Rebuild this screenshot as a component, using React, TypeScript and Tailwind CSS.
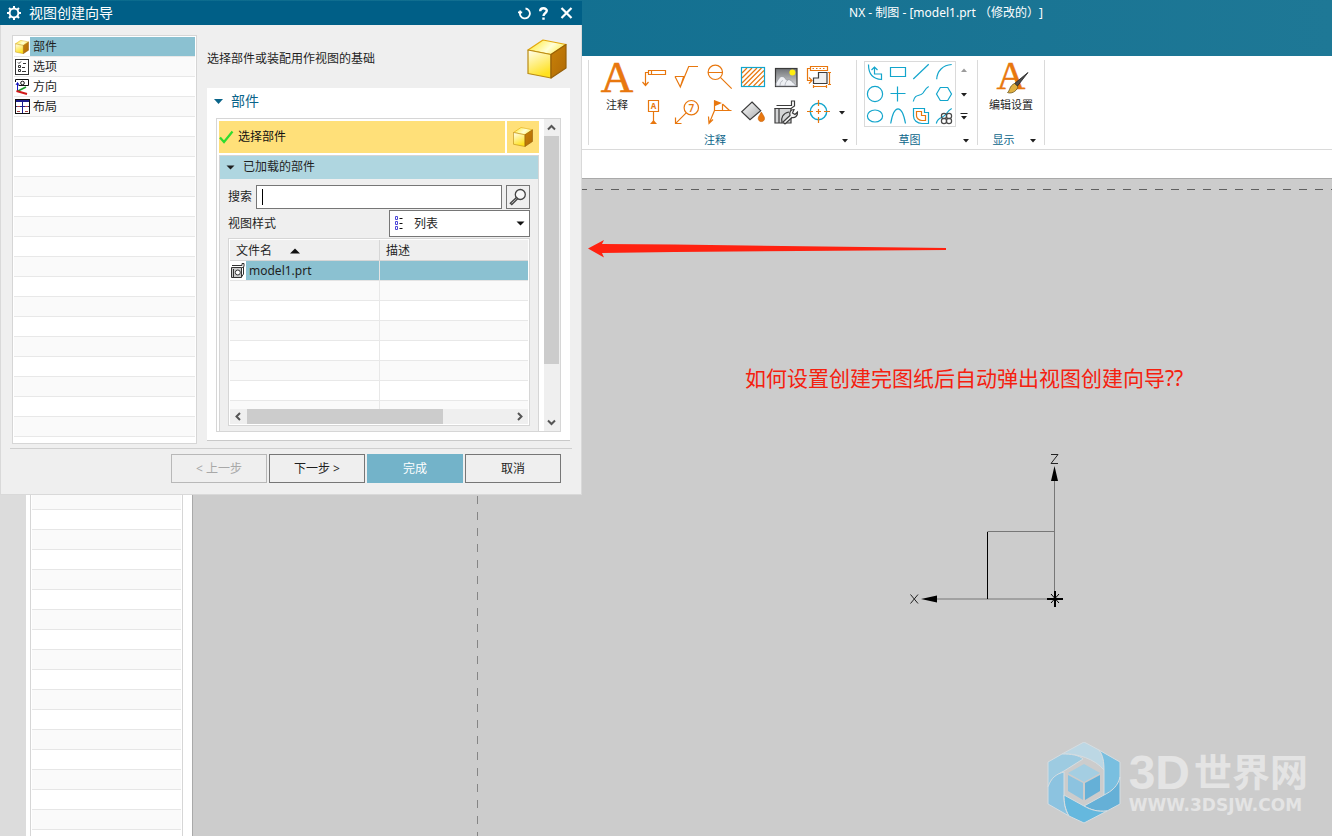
import type { ReactNode } from 'react';

const ORANGE = '#e8770e';
const CYAN = '#12a5cc';
const INK = '#3c3c3c';

function Cube({ size }: { size: number }) {
  return (
    <svg width={size} height={size} viewBox="0 0 40 40" className="block shrink-0">
      <defs>
        <linearGradient id="cubeFront" x1="0" y1="0" x2="0.4" y2="1">
          <stop offset="0" stopColor="#fffef0" />
          <stop offset="1" stopColor="#ffe11f" />
        </linearGradient>
        <linearGradient id="cubeTop" x1="0" y1="0.2" x2="1" y2="0.6">
          <stop offset="0" stopColor="#ffe92e" />
          <stop offset="0.6" stopColor="#ffffd8" />
          <stop offset="1" stopColor="#ffee50" />
        </linearGradient>
        <linearGradient id="cubeSide" x1="0" y1="0" x2="1" y2="1">
          <stop offset="0" stopColor="#c98208" />
          <stop offset="1" stopColor="#b06a06" />
        </linearGradient>
      </defs>
      <path d="M1 11 L16 1 L39 5.5 L24 15.5 Z" fill="url(#cubeTop)" stroke="#e3a70c" strokeWidth="1.2" strokeLinejoin="round" />
      <path d="M1 11 L24 15.5 L24 39 L1 34.5 Z" fill="url(#cubeFront)" stroke="#b98a12" strokeWidth="1.2" strokeLinejoin="round" />
      <path d="M24 15.5 L39 5.5 L39 29 L24 39 Z" fill="url(#cubeSide)" stroke="#96600a" strokeWidth="1.2" strokeLinejoin="round" />
    </svg>
  );
}

function Caret({ className = 'text-[#1f1f1f]', bar = false }: { className?: string; bar?: boolean }) {
  return (
    <svg width="8" height="8" viewBox="0 0 8 8" className={className} fill="currentColor">
      {bar && <path d="M0.5 0h7v1h-7z" />}
      <path d="M1 3h6L4 6.5z" />
    </svg>
  );
}

function Glyph({ w, h, children }: { w: number; h: number; children: ReactNode }) {
  return (
    <svg width={w} height={h} viewBox={`0 0 ${w} ${h}`} fill="none" strokeWidth="1.2" className="block">
      {children}
    </svg>
  );
}

const annotationTools: { name: string; art: ReactNode }[] = [
  {
    name: '特征控制框',
    art: <path stroke={ORANGE} d="M11.5 10.5H28.5V14.5H11.5ZM14.5 10.5V14.5M11.5 12.5H8.5V25.5M5.5 22L8.5 25.5L11.5 22" />,
  },
  { name: '表面粗糙度', art: <path stroke={ORANGE} d="M5 16.5H13.7L10.3 27L5 16.5M10.3 27L18.7 6.5H28" /> },
  {
    name: '剖切线',
    art: (
      <g stroke={ORANGE}>
        <circle cx="12.3" cy="12.3" r="7.2" />
        <path d="M5 12.5H19.5M17.6 17.6L28.7 28.7" />
      </g>
    ),
  },
  {
    name: '剖面线',
    art: (
      <>
        <path
          stroke={ORANGE}
          d="M6 13L11 8M6 18L16 8M6 23L21 8M7.5 26L25.5 8M12.5 26L28 10.5M17.5 26L28 15.5M22.5 26L28 20.5"
        />
        <rect x="5.5" y="7.5" width="23" height="19" stroke={CYAN} />
      </>
    ),
  },
  {
    name: '图像',
    art: (
      <>
        <defs>
          <linearGradient id="sky" x1="0" y1="0" x2="0" y2="1">
            <stop offset="0" stopColor="#6f7276" />
            <stop offset="1" stopColor="#d9dadb" />
          </linearGradient>
        </defs>
        <rect x="6.5" y="8.5" width="21.5" height="18" fill="url(#sky)" stroke="#3a3a3a" />
        <path d="M7 23C9 20 10.5 16.5 13 16.5C16 16.5 16.5 19.5 18 20.5C20 18.5 22 20 27.5 26H7Z" fill="#eef0f4" stroke="#8a8e96" strokeWidth="0.7" />
        <path d="M11 26C11 23 12 21 14 20.5M16 26C16 23.5 17 21.5 18.5 20.5" stroke="#a4a8b0" strokeWidth="0.7" />
        <circle cx="23.4" cy="12.6" r="3" fill="#ffee10" />
      </>
    ),
  },
  {
    name: '尺寸',
    art: (
      <>
        <path d="M11.5 23.5V18H16.5V12.5H25V23.5Z" fill="#f0f0f0" stroke={INK} />
        <g stroke={ORANGE}>
          <path d="M8.5 6.5H25.5V10.5H8.5Z" />
          <path d="M10.5 8.5H24" strokeDasharray="1.5 2" />
          <path d="M8.5 8.5H5.5V20.5H10M7 17.5L10 20.5L7 23.5" />
          <path d="M27.5 12.5V24M26 12.5H29M26 24.5H29M11.5 26.5H24.5M11.5 25V28M24.5 25V28" />
        </g>
      </>
    ),
  },
  {
    name: '基准',
    art: (
      <>
        <path stroke={ORANGE} d="M11.5 5.5H21.5V16.5H11.5ZM16.5 16.5V28" />
        <path fill={ORANGE} d="M13 29H20L16.5 25Z" />
        <text x="16.5" y="14" fontSize="8" fontWeight="700" textAnchor="middle" fill={ORANGE}>A</text>
      </>
    ),
  },
  {
    name: '符号标注',
    art: (
      <>
        <g stroke={ORANGE}>
          <circle cx="21.3" cy="12.7" r="7.2" />
          <path d="M16.2 17.8L5.7 28.3M5.5 22.5V28.5H11.5" />
        </g>
        <text x="21.3" y="16.5" fontSize="10" fontWeight="600" textAnchor="middle" fill={ORANGE}>7</text>
      </>
    ),
  },
  {
    name: '焊接符号',
    art: (
      <>
        <path fill={ORANGE} d="M11 5L19 8L11 11.5Z" />
        <path stroke={ORANGE} d="M11.5 5.5V15.5H28.5M11.5 15.5L6.3 28M5.5 21.5L6 28.5L10 24.5M19.5 9V15.5M19.5 9L26.5 15.5" />
      </>
    ),
  },
  {
    name: '区域填充',
    art: (
      <>
        <defs>
          <linearGradient id="bucket" x1="0" y1="0" x2="1" y2="1">
            <stop offset="0" stopColor="#fff" />
            <stop offset="1" stopColor="#a8aaac" />
          </linearGradient>
        </defs>
        <path d="M16 7L24.7 15.7L14 24.7L5.7 16.7Z" fill="url(#bucket)" stroke={INK} />
        <path d="M25.3 17C27 20 28.5 21.5 28.5 23.5C28.5 27.6 22.2 27.6 22.2 23.5C22.2 21.5 24 20 25.3 17Z" fill="#e8770e" stroke="#c25c05" strokeWidth="0.6" />
      </>
    ),
  },
  {
    name: '制图工具',
    art: (
      <>
        <path d="M6 13.5H22V28H6Z" fill="#d4d5d6" stroke={INK} />
        <path d="M7.5 10.5H22.5V6H25.5V11L22 13.5H5.5" fill="#fff" stroke={INK} />
        <path d="M10 14V28M13 28C11.5 23 14 18 20 17" stroke={INK} />
        <path d="M14 27L21 20.5C20 17 22 14.5 25 14.5L23.5 18L26 19.5L28.5 17C29 21 26 23 23 22.5L16 29Z" fill="#f4f4f4" stroke={INK} />
      </>
    ),
  },
  {
    name: '中心标记',
    art: (
      <>
        <circle cx="16.5" cy="16.5" r="8.2" stroke={CYAN} strokeWidth="1.4" />
        <path stroke={ORANGE} d="M5 16.5H11M22 16.5H28M16.5 5V11M16.5 22V28M14 16.5H19M16.5 14V19" />
      </>
    ),
  },
];

const sketchTools: { name: string; art: ReactNode }[] = [
  { name: '轮廓', art: <path d="M4.5 3.5C4.5 12 8 18 17.5 18.5V13H10.5V7M7.5 9L10.5 6L13.5 9" /> },
  { name: '矩形', art: <path d="M3.5 6.5H18.5V15.5H3.5Z" /> },
  { name: '直线', art: <path d="M3.3 18L18.7 3.3" /> },
  { name: '圆弧', art: <path d="M3.7 18.3C4 10 10 4 18.7 3.5" /> },
  { name: '圆', art: <circle cx="11" cy="11" r="7.6" /> },
  { name: '点', art: <path d="M10.5 3.5V18.5M3.5 10.5H18.5" /> },
  { name: '样条', art: <path d="M3.3 18.5C5 10 10 14 13 10C15 7 16 5 18.7 3.5" /> },
  { name: '多边形', art: <path d="M3.5 11L7.3 4.5H14.7L18.5 11L14.7 17.5H7.3Z" /> },
  { name: '椭圆', art: <ellipse cx="11" cy="11" rx="7.6" ry="6" /> },
  { name: '二次曲线', art: <path d="M3.7 18.5C7 -1 15 -1 18.5 18.5" /> },
  {
    name: '偏置曲线',
    art: (
      <>
        <path d="M3.5 3.5H14.5V7.5H18.5V18.5H12C7 18.5 3.5 15 3.5 11Z" />
        <path stroke={ORANGE} d="M6.5 6.5H11.5V10.5H15.5V15.5H12C9 15.5 6.5 13 6.5 11Z" />
      </>
    ),
  },
  {
    name: '阵列曲线',
    art: (
      <>
        <path d="M3.3 18.5C5 11 10 14 13 9C15 6 16 5 18.7 3.5" />
        <g stroke="#4a4a4a">
          <circle cx="11" cy="11" r="2.6" />
          <circle cx="16" cy="11" r="2.6" />
          <circle cx="11" cy="16" r="2.6" />
          <circle cx="16" cy="16" r="2.6" />
        </g>
      </>
    ),
  },
];

function GroupLabel({ children }: { children: ReactNode }) {
  return (
    <div className="flex h-2.5 items-center leading-[10px]">
      <span className="flex-1 text-center text-[#0a6489]">{children}</span>
      <button aria-label="更多" className="mr-[7px]">
        <Caret />
      </button>
    </div>
  );
}

function Ribbon() {
  return (
    <div className="flex h-[94px] shrink-0 border-b border-[#dadada] bg-white pt-1 pb-1 pl-[588px] text-[11px] text-[#1f1f1f]">
      <section className="flex w-[268px] shrink-0 flex-col justify-between border-l border-[#dadada]">
        <div className="flex">
          <button className="flex w-12 shrink-0 flex-col items-center pt-px pl-2">
            <svg width="34" height="34" viewBox="0 0 34 34" className="overflow-visible">
              <text x="17" y="31" fontSize="45" textAnchor="middle" fill={ORANGE} stroke={ORANGE} strokeWidth="0.6" className="font-['Liberation_Serif',serif]">A</text>
            </svg>
            <span className="leading-5">注释</span>
          </button>
          <div className="grid shrink-0 grid-cols-[repeat(6,33px)]">
            {annotationTools.map((t) => (
              <button key={t.name} aria-label={t.name} className="h-[35px]">
                <Glyph w={33} h={35}>{t.art}</Glyph>
              </button>
            ))}
          </div>
          <button aria-label="更多注释" className="mt-12 ml-[3px] shrink-0 self-start">
            <Caret />
          </button>
        </div>
        <GroupLabel>注释</GroupLabel>
      </section>

      <section className="flex w-[121px] shrink-0 flex-col justify-between border-l border-[#dadada]">
        <div className="flex pt-px pl-[7px]">
          <div className="grid h-[66px] grid-cols-[repeat(4,23px)] ring-1 ring-[#dadada] ring-inset">
            {sketchTools.map((t) => (
              <button key={t.name} aria-label={t.name} className="h-[22px]">
                <svg width="23" height="22" viewBox="0 0 23 22" fill="none" stroke={CYAN} strokeWidth="1.2" className="block">
                  {t.art}
                </svg>
              </button>
            ))}
          </div>
          <div className="flex h-[66px] flex-col justify-between py-1.5 pl-1">
            <button aria-label="上翻" className="rotate-180">
              <Caret className="text-[#9b9b9b]" />
            </button>
            <button aria-label="下翻">
              <Caret />
            </button>
            <button aria-label="展开">
              <Caret bar />
            </button>
          </div>
        </div>
        <GroupLabel>草图</GroupLabel>
      </section>

      <section className="flex w-[68px] shrink-0 flex-col justify-between border-x border-[#dadada]">
        <button className="flex flex-col items-center pt-px">
          <svg width="36" height="34" viewBox="0 0 36 34" className="overflow-visible">
            <text x="18" y="28" fontSize="40" textAnchor="middle" fill={ORANGE} stroke={ORANGE} strokeWidth="0.4" className="font-['Liberation_Serif',serif]">A</text>
            <path d="M35 11.5L24.5 25L21.5 22.5Z" fill="#4c4c4c" stroke="#222" strokeWidth="0.8" />
            <path d="M21.5 22.5L25 26C23 31 18 33 14.5 31.5C17 30 16 25 21.5 22.5Z" fill="#e0b040" stroke="#6d541a" strokeWidth="0.8" />
          </svg>
          <span className="leading-5">编辑设置</span>
        </button>
        <GroupLabel>显示</GroupLabel>
      </section>
    </div>
  );
}

function Watermark() {
  return (
    <div className="absolute right-6 bottom-3 flex items-center gap-2 text-[#e4e4e4]">
      <svg width="74" height="82" viewBox="0 0 74 82">
        <g stroke="#d6dde1" strokeWidth="1">
          <path d="M15 12L37 0L52 8C57 14 57 22 57 28C48 17 30 11 15 12Z" fill="#bcd7e4" />
          <path d="M15 12C24 12 32 13 36 17L17 29C8 33 4 39 1 45V20Z" fill="#9dcbe1" />
          <path d="M1 45C4 36 9 32 17 30V53C17 61 18 68 22 74L1 62Z" fill="#8cc3e0" />
          <path d="M52 8L73 20V35C72 45 65 51 57 54V28C57 20 56 13 52 8Z" fill="#79bfe0" />
          <path d="M73 35V62L60 69C51 70 44 68 37 64L57 53C65 49 71 44 73 35Z" fill="#65b0d7" />
          <path d="M17 53L37 64C44 68 51 70 60 69L37 81L22 74C18 67 17 60 17 53Z" fill="#65b8de" />
        </g>
        <path d="M21 31L37 22L53 31L37 40Z" fill="#a4cee2" />
        <path d="M21 33L36 41V58L21 49Z" fill="#8cc3e0" />
        <path d="M53 33L38 41V58L53 49Z" fill="#65b0d7" />
      </svg>
      <div className="flex flex-col pt-1">
        <span className="flex h-10 items-center gap-1 font-['Liberation_Sans','Noto_Sans_CJK_SC',sans-serif] text-[38px] leading-10 font-bold">
          <span className="text-5xl leading-10">3D</span>世界网
        </span>
        <span className="font-['DejaVu_Sans',sans-serif] text-[17px] leading-6 font-bold">WWW.3DSJW.COM</span>
      </div>
    </div>
  );
}

function Canvas() {
  return (
    <main className="relative flex-1 overflow-hidden bg-[#ccc]">
      <svg width="100%" height="100%" className="absolute inset-0">
        <path d="M290 10.5H2400" stroke="#5f5f5f" strokeDasharray="8 8" />
        <path d="M284.5 13V2400" stroke="#858585" strokeDasharray="8 8" />
        <path d="M395 69.5L411 61L409 65L481 65.5L753 69V71L481 73L409 74L411 78.5Z" fill="#ff2110" />
        <g stroke="#777">
          <path d="M861.5 420.5V290M794.5 352.5H861.5M735 420H861.5" />
          <path d="M794.5 353V420" stroke="#000" />
        </g>
        <path d="M861.5 287L865 302H858ZM728 420L744 416.5V423.5Z" />
        <path d="M862 412V428M854 420H870" stroke="#000" strokeWidth="2" />
        <path d="M858 415L866 424M866 415L858 424" stroke="#000" />
        <path d="M858 275.5H865L858 284.5H865M717.5 415.5L725 424.5M725 415.5L717.5 424.5" stroke="#222" fill="none" />
      </svg>
      <p className="absolute top-[183px] left-[552px] text-[21px] leading-8 whitespace-nowrap text-[#f5200f]">
        如何设置创建完图纸后自动弹出视图创建向导??
      </p>
      <Watermark />
    </main>
  );
}

function SidePanel() {
  return (
    <aside className="flex w-[193px] shrink-0 border-r border-[#a9a9a9] bg-[#dcdcdc] pl-[26px]">
      <div className="flex flex-1 bg-white pt-[10px] pr-[9px] pl-1">
        <div className="flex-1 overflow-hidden border border-b-0 border-[#d6d6d6] px-px">
          {Array.from({ length: 34 }, (_, i) => (
            <div key={i} className="h-5 border-b border-[#e6e6e6] odd:bg-white even:bg-[#fafafa]" />
          ))}
        </div>
      </div>
    </aside>
  );
}

const steps: { label: string; icon: ReactNode }[] = [
  { label: '部件', icon: <Cube size={14} /> },
  {
    label: '选项',
    icon: (
      <svg width="15" height="16" viewBox="0 0 15 16" fill="none" stroke="#333">
        <rect x="0.5" y="0.5" width="13" height="15" fill="#fff" />
        <path d="M3 3.5L4 4.5L6 2.5M3.5 6.5H5.5V8.5H3.5ZM3.5 10.5H5.5V12.5H3.5ZM8 4.5H11M7 8.5H10M7 12.5H11" />
      </svg>
    ),
  },
  {
    label: '方向',
    icon: (
      <svg width="15" height="16" viewBox="0 0 15 16" fill="none">
        <path d="M3.5 6.5H13.5V0.5H0.5V3" stroke="#111" fill="#fff" />
        <circle cx="7.5" cy="4" r="1.8" stroke="#111" />
        <path d="M2.5 12V4M1 6L2.5 3.5L4 6" stroke="#1717c0" />
        <path d="M3 12L11 8" stroke="#1a9a2a" strokeWidth="1.8" />
        <path d="M1.5 12L12 15" stroke="#d01818" strokeWidth="2" />
      </svg>
    ),
  },
  {
    label: '布局',
    icon: (
      <svg width="15" height="15" viewBox="0 0 15 15" fill="none">
        <rect x="0.5" y="0.5" width="14" height="14" stroke="#111" fill="#fff" />
        <path d="M1 2H14" stroke="#1b1b8c" strokeWidth="2" />
        <path d="M7.5 2V14M1 7.5H14" stroke="#1b1b8c" />
        <path d="M2 7.5H5M10 7.5H13M2 12.5H5M10 12.5H13" stroke="#a44" />
      </svg>
    ),
  },
];

function StepList() {
  return (
    <ul className="h-[409px] w-[185px] shrink-0 overflow-hidden border border-[#d6d6d6] bg-white p-px">
      {Array.from({ length: 20 }, (_, i) => {
        const step = steps[i];
        return (
          <li key={i} className="flex h-5 border-b border-[#e8e8e8] odd:bg-white even:bg-[#fafafa]">
            {step && (
              <button className="flex flex-1 items-stretch text-left">
                <span className="flex w-4 items-center justify-center bg-white">{step.icon}</span>
                <span className={i === 0 ? 'flex-1 bg-[#8bc1d1] pl-[3px] leading-[19px]' : 'flex-1 pl-[3px] leading-[19px]'}>
                  {step.label}
                </span>
              </button>
            )}
          </li>
        );
      })}
    </ul>
  );
}

function Chevron({ d }: { d: string }) {
  return (
    <svg width="9" height="9" viewBox="0 0 9 9" fill="none" stroke="#555" strokeWidth="2">
      <path d={d} />
    </svg>
  );
}

function FileTable() {
  return (
    <div className="flex h-[188px] flex-col border border-[#d6d6d6] bg-white p-px">
      <div className="h-[169px] overflow-hidden">
        <table className="w-full table-fixed border-separate border-spacing-0">
          <thead>
            <tr className="h-[21px] bg-[#efefef] text-left">
              <th className="w-[150px] border-r border-b border-[#d6d6d6] p-0 pt-px pl-1.5 leading-[19px] font-normal">
                <span className="flex items-center gap-[18px]">
                  文件名
                  <svg width="10" height="6" viewBox="0 0 10 6">
                    <path d="M0 5.5L5 0.5L10 5.5Z" fill="#111" />
                  </svg>
                </span>
              </th>
              <th className="border-b border-[#d6d6d6] p-0 pt-px pl-1.5 leading-[19px] font-normal">描述</th>
            </tr>
          </thead>
          <tbody>
            <tr className="h-5">
              <td className="border-r border-b border-[#e4e4e4] bg-[#8bc1d1] p-0">
                <span className="flex h-[19px] items-stretch">
                  <span className="flex w-4 items-center justify-center bg-white">
                    <svg width="14" height="15" viewBox="0 0 14 15" fill="none" stroke="#333">
                      <path d="M0.5 4.5H10.5V14.5H0.5Z" fill="#ccc" />
                      <path d="M1 2.5H11V0.5H13V3.5L10.5 5V14L12.5 11V4M2.5 14V6" />
                      <circle cx="6.8" cy="9.5" r="2.5" fill="#fff" />
                    </svg>
                  </span>
                  <span className="pl-[3px] leading-5">model1.prt</span>
                </span>
              </td>
              <td className="border-b border-[#e4e4e4] bg-[#8bc1d1] p-0" />
            </tr>
            {Array.from({ length: 7 }, (_, i) => (
              <tr key={i} className="h-5 odd:bg-white even:bg-[#fafafa]">
                <td className="border-r border-b border-[#e8e8e8] p-0" />
                <td className="border-b border-[#e8e8e8] p-0" />
              </tr>
            ))}
          </tbody>
        </table>
      </div>
      <div className="flex h-[15px] items-center bg-[#efefef]">
        <button aria-label="向左滚动" className="flex w-[17px] justify-center">
          <Chevron d="M6 1L2.5 4.5L6 8" />
        </button>
        <div className="h-[15px] w-49 bg-[#ccc]" />
        <button aria-label="向右滚动" className="ml-auto flex w-[17px] justify-center">
          <Chevron d="M3 1L6.5 4.5L3 8" />
        </button>
      </div>
    </div>
  );
}

function PartPicker() {
  return (
    <div className="flex h-[314px] justify-between border border-[#d6d6d6] bg-white pl-0.5">
      <div className="flex w-80 flex-col pt-0.5">
        <div className="flex h-8 gap-0.5">
          <div className="flex flex-1 items-center gap-1 bg-[#ffe079] text-[#111]">
            <svg width="15" height="14" viewBox="0 0 15 14" fill="none">
              <path d="M1 7.5L5 12L13.5 1.5" stroke="#2fdc2f" strokeWidth="2.2" />
            </svg>
            选择部件
          </div>
          <button aria-label="选择部件" className="flex w-8 items-center justify-center bg-[#ffe079]">
            <Cube size={20} />
          </button>
        </div>
        <div className="mt-0.5 flex flex-1 flex-col border-x border-t border-[#d6d6d6] bg-[#efefef]">
          <button className="flex h-[23px] shrink-0 items-center gap-2 bg-[#afd6e0] pb-px pl-1.5">
            <svg width="9" height="5" viewBox="0 0 9 5">
              <path d="M0.5 0.5H8.5L4.5 4.5Z" fill="#1f1f1f" />
            </svg>
            已加载的部件
          </button>
          <div className="flex flex-col px-2 pt-1.5">
            <div className="flex h-6 items-center">
              <label htmlFor="part-search" className="w-7">搜索</label>
              <div className="relative flex-1">
                <input id="part-search" className="block h-6 w-full border border-[#767676] bg-white px-1 outline-none" />
                <span className="absolute top-1 left-1.5 h-4 w-px bg-black" />
              </div>
              <button aria-label="搜索" className="ml-1 flex size-6 items-center justify-center border border-[#767676]">
                <svg width="18" height="18" viewBox="0 0 18 18" fill="none" stroke="#444" strokeWidth="1.3">
                  <circle cx="11.3" cy="6.5" r="5" fill="#f8f8f8" />
                  <path d="M7.5 9.5L8.7 10.8L2.8 16.5L1.3 15.2Z" fill="#eee" />
                </svg>
              </button>
            </div>
            <div className="mt-px flex h-[27px] items-center justify-between">
              <label htmlFor="view-style">视图样式</label>
              <div className="relative">
                <select id="view-style" className="block h-[27px] w-[141px] appearance-none border border-[#767676] bg-white pl-6 outline-none">
                  <option>列表</option>
                </select>
                <svg width="8" height="15" viewBox="0 0 8 15" className="pointer-events-none absolute top-1.5 left-1.5" fill="none">
                  <path d="M0.5 0.5H2.5V3.5H0.5ZM0.5 5.5H2.5V8.5H0.5ZM0.5 10.5H2.5V13.5H0.5Z" stroke="#4c48d8" />
                  <path d="M4.5 2.5H7.5M4.5 7.5H7.5M4.5 12.5H7.5" stroke="#111" />
                </svg>
                <svg width="9" height="8" viewBox="0 0 9 8" className="pointer-events-none absolute top-[9px] right-[5px]">
                  <path d="M0.5 2.5H8.5L4.5 6.5Z" fill="#111" />
                </svg>
              </div>
            </div>
            <div className="mt-px">
              <FileTable />
            </div>
          </div>
        </div>
      </div>
      <div className="flex w-4 flex-col items-center bg-[#efefef] pr-px">
        <button aria-label="向上滚动" className="flex h-[17px] items-center">
          <Chevron d="M1 6.5L4.5 3L8 6.5" />
        </button>
        <div className="h-[228px] w-[15px] bg-[#ccc]" />
        <button aria-label="向下滚动" className="mt-auto flex h-[17px] items-center">
          <Chevron d="M1 2.5L4.5 6L8 2.5" />
        </button>
      </div>
    </div>
  );
}

function WizardDialog() {
  return (
    <div role="dialog" aria-label="视图创建向导" className="absolute top-px left-0 flex w-[582px] flex-col text-xs text-[#1f1f1f]">
      <header className="flex h-6 items-center bg-[#005f87] pr-[9px] pl-1.5 text-white">
        <svg width="16" height="16" viewBox="0 0 16 16" fill="none" stroke="#fff">
          <circle cx="8" cy="8" r="4.4" strokeWidth="2" />
          <path d="M8 1V4M8 12V15M1 8H4M12 8H15M3 3L5 5M11 11L13 13M13 3L11 5M5 11L3 13" strokeWidth="2" />
        </svg>
        <h1 className="ml-[7px] flex-1 text-sm">视图创建向导</h1>
        <button aria-label="重置" className="mr-2">
          <svg width="13" height="13" viewBox="0 0 13 13" fill="none" stroke="#fff" strokeWidth="1.8" className="block">
            <path d="M7.5 1.5A5 5 0 1 1 2 5.5M0 5.4H4.2M2.2 3.4V7" />
          </svg>
        </button>
        <button aria-label="帮助" className="mr-3">
          <svg width="9" height="13" viewBox="0 0 9 13" fill="none" stroke="#fff" strokeWidth="2.4" className="block">
            <path d="M1.2 4.2C1.2 0.4 7.8 0.4 7.8 3.8C7.8 6 4.5 6 4.5 9M4.5 10.4V12.8" />
          </svg>
        </button>
        <button aria-label="关闭">
          <svg width="13" height="12" viewBox="0 0 13 12" fill="none" stroke="#fff" strokeWidth="2.2" className="block">
            <path d="M1.5 1L11.5 11M11.5 1L1.5 11" />
          </svg>
        </button>
      </header>
      <div className="border-x border-b border-[#d9d9d9] bg-[#efefef] pt-[10px] pr-[9px] pb-[11px] pl-[9px]">
        <div className="flex gap-[10px] px-0.5">
          <StepList />
          <div className="flex flex-1 flex-col">
            <div className="flex h-[53px] items-center justify-between pr-[3px]">
              <p className="pb-1.5">选择部件或装配用作视图的基础</p>
              <span className="pb-1.5">
                <Cube size={40} />
              </span>
            </div>
            <section className="border-b border-[#c9c9c9] bg-white pb-2">
              <button className="flex h-[30px] items-center gap-2 pb-1 pl-[7px] text-sm text-[#0a6489]">
                <svg width="9" height="5" viewBox="0 0 9 5">
                  <path d="M0 0H9L4.5 5Z" fill="#0a6489" />
                </svg>
                部件
              </button>
              <div className="px-[9px]">
                <PartPicker />
              </div>
            </section>
          </div>
        </div>
        <footer className="mt-1 flex justify-end gap-0.5 border-t border-[#cfcfcf] pt-[5px] pr-[11px]">
          <button disabled className="h-[29px] w-24 border border-[#b8b8b8] text-[#a8a8a8]">&lt; 上一步</button>
          <button className="h-[29px] w-24 border border-[#767676]">下一步 &gt;</button>
          <button className="h-[29px] w-24 bg-[#73b3c9] text-white">完成</button>
          <button className="h-[29px] w-24 border border-[#767676]">取消</button>
        </footer>
      </div>
    </div>
  );
}

export default function App() {
  return (
    <div className="relative flex h-screen flex-col overflow-hidden bg-white font-['Noto_Sans','Noto_Sans_CJK_SC',sans-serif]">
      <div className="flex h-14 shrink-0 justify-center bg-linear-to-r from-[#086a8d] to-[#1e7896] pt-1 pl-[560px] text-xs leading-[18px] text-white [text-spacing-trim:space-all]">
        NX - 制图 - [model1.prt （修改的）]
      </div>
      <Ribbon />
      <div className="h-7 shrink-0 bg-white" />
      <div className="flex min-h-0 flex-1 border-t border-[#a9a9a9]">
        <SidePanel />
        <Canvas />
      </div>
      <WizardDialog />
    </div>
  );
}
